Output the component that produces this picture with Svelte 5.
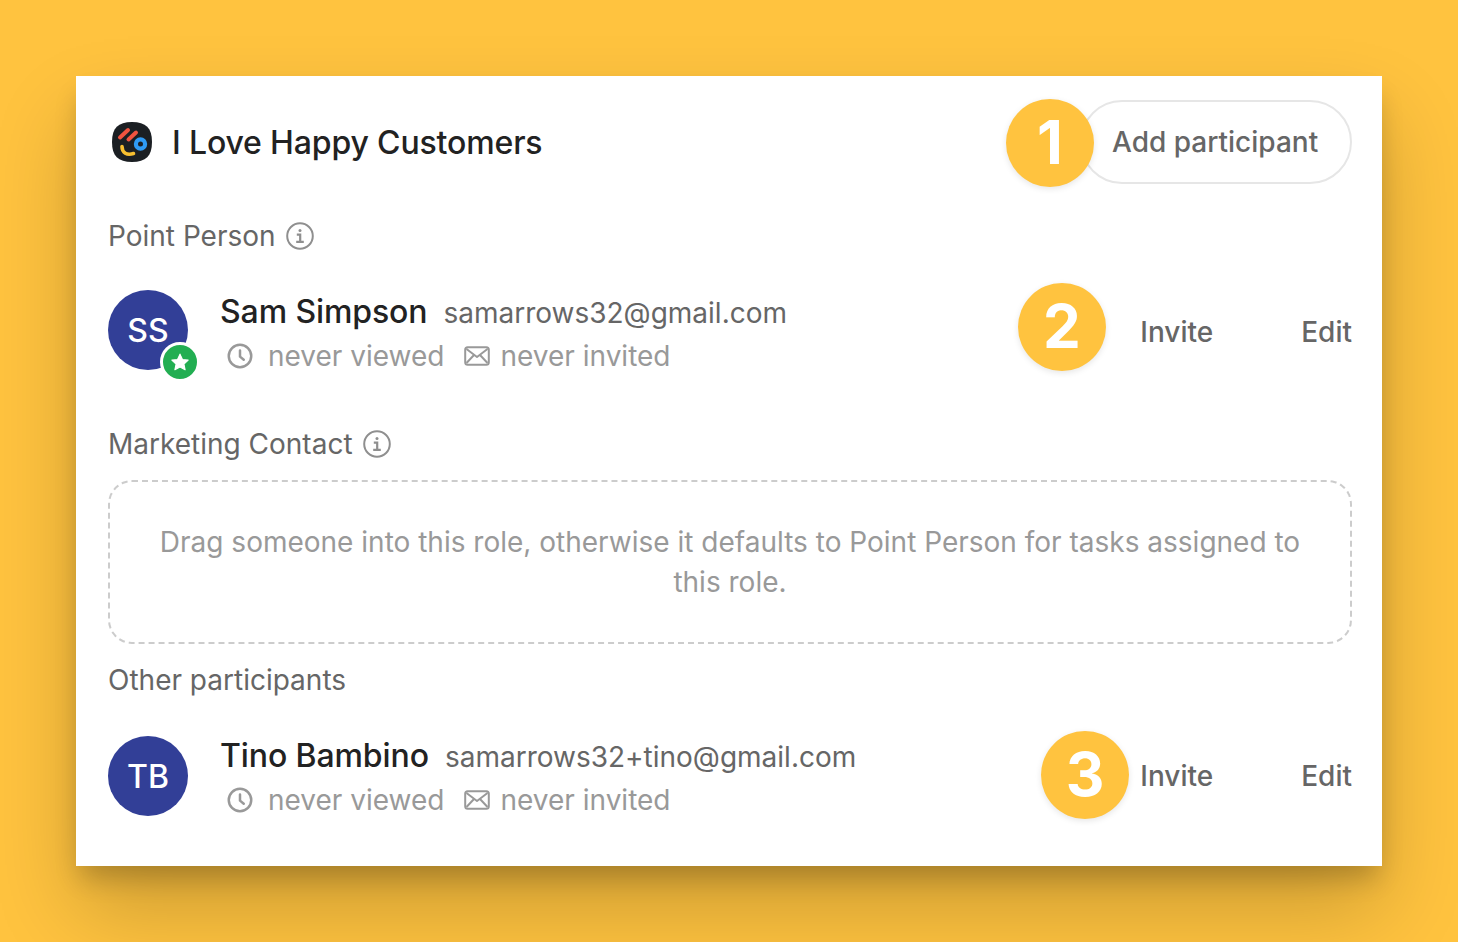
<script>
  const clock = "M12 3a9 9 0 1 0 0 18a9 9 0 0 0 0-18zM12 7.5v5l3 2.5";
</script>

{#snippet infoIcon()}
  <svg class="info" viewBox="0 0 28 28" fill="none" stroke="#8f8f8f" stroke-width="2">
    <circle cx="14" cy="14" r="12.8" />
    <circle cx="14" cy="8.4" r="1.5" fill="#8f8f8f" stroke="none" />
    <path d="M10.8 12.6h3.4v7M10.2 19.8h7.6" stroke-width="2.2" />
  </svg>
{/snippet}

{#snippet status()}
  <div class="status">
    <svg class="clock" viewBox="0 0 24 24" fill="none" stroke="#999" stroke-width="2" stroke-linecap="round" stroke-linejoin="round">
      <path d={clock} />
    </svg>
    <span class="st-text">never viewed</span>
    <svg class="mail" viewBox="0 0 26 20" fill="none" stroke="#999" stroke-width="2" stroke-linejoin="round">
      <rect x="1.2" y="1.2" width="23.6" height="17.6" rx="2.5" />
      <path d="M2.5 3l10.5 8l10.5-8M2.5 17l7.5-8M23.5 17l-7.5-8" />
    </svg>
    <span class="st-text">never invited</span>
  </div>
{/snippet}

<div class="page">
  <div class="card">
    <header class="head">
      <svg class="logo" viewBox="0 0 40 40">
        <path d="M20 0C34 0 40 6 40 20S34 40 20 40S0 34 0 20S6 0 20 0z" fill="#1b1f23" />
        <path d="M8 15.5L16 8M16.5 17.5L24 10.5" stroke="#f1533f" stroke-width="4" stroke-linecap="round" fill="none" />
        <circle cx="28.5" cy="22" r="4.6" fill="none" stroke="#2f9bf5" stroke-width="4.2" />
        <path d="M10 24.5C10 31 15 33.5 21.5 31.5" stroke="#f7bf30" stroke-width="3.6" stroke-linecap="round" fill="none" />
      </svg>
      <h1>I Love Happy Customers</h1>
      <button class="add">Add participant</button>
      <span class="badge b1">1</span>
    </header>

    <div class="label first">Point Person {@render infoIcon()}</div>
    <div class="person">
      <div class="avatar">
        SS
        <span class="star">
          <svg viewBox="0 0 24 24" fill="#fff" stroke="#fff" stroke-width="1.2" stroke-linejoin="round"><path d="M12 3.4l2.7 5.8l6.2.8l-4.6 4.3l1.3 6.2L12 17.4l-5.6 3.1l1.3-6.2l-4.6-4.3l6.2-.8z" /></svg>
        </span>
      </div>
      <div class="info-col lead">
        <div class="who"><span class="name">Sam Simpson</span><span class="email">samarrows32@gmail.com</span></div>
        {@render status()}
      </div>
      <div class="actions lead"><span class="invite">Invite</span><span>Edit</span></div>
      <span class="badge b2">2</span>
    </div>

    <div class="label second">Marketing Contact {@render infoIcon()}</div>
    <div class="drop">Drag someone into this role, otherwise it defaults to Point Person for tasks assigned to this role.</div>

    <div class="label third">Other participants</div>
    <div class="person last">
      <div class="avatar">TB</div>
      <div class="info-col other">
        <div class="who"><span class="name">Tino Bambino</span><span class="email">samarrows32+tino@gmail.com</span></div>
        {@render status()}
      </div>
      <div class="actions"><span class="invite">Invite</span><span>Edit</span></div>
      <span class="badge b3">3</span>
    </div>
  </div>
</div>

<style>
  :global(body) {
    background: #ffc33f;
    font-family: Inter, "Liberation Sans", sans-serif;
  }

  .page {
    width: 1458px;
    height: 942px;
    padding: 76px 76px 0;
    box-sizing: border-box;
    overflow: hidden;
  }

  .card {
    width: 1306px;
    height: 790px;
    box-sizing: border-box;
    background: #fff;
    padding: 24px 30px 0 32px;
    box-shadow: 0 44px 80px rgba(0, 0, 0, 0.2), 0 16px 24px -4px rgba(0, 0, 0, 0.2);
  }

  .head {
    position: relative;
    display: flex;
    align-items: center;
    height: 84px;
  }

  .logo {
    width: 40px;
    height: 40px;
    margin: 0 20px 0 4px;
    flex: none;
  }

  h1 {
    margin: 0;
    font-size: 32px;
    font-weight: 500;
    color: #222;
    flex: 1;
    letter-spacing: -0.15px;
  }

  .add {
    width: 272px;
    height: 84px;
    box-sizing: border-box;
    border: 2px solid #e6e6e6;
    border-radius: 42px;
    background: #fff;
    font: 500 28px Inter, sans-serif;
    color: #666;
    padding: 0 0 0 30px;
    text-align: left;
  }

  .badge {
    position: absolute;
    width: 88px;
    height: 88px;
    box-sizing: border-box;
    padding-bottom: 2px;
    border-radius: 50%;
    background: #ffc33f;
    color: #fff;
    font-size: 60px;
    font-weight: 700;
    display: flex;
    align-items: center;
    justify-content: center;
    box-shadow: 0 2px 6px rgba(0, 0, 0, 0.1);
  }

  .b1 { right: 258px; top: -1px; }
  .b2 { right: 246px; top: -7px; }
  .b3 { right: 223px; top: -5px; }

  .label {
    display: flex;
    align-items: center;
    gap: 10px;
    font-size: 28px;
    color: #666;
    height: 40px;
  }

  .first { margin-top: 32px; }
  .second { margin-top: 54px; }
  .third { margin-top: 16px; }

  .info {
    width: 28px;
    height: 28px;
  }

  .person {
    position: relative;
    display: flex;
    align-items: center;
    height: 80px;
    margin-top: 34px;
  }

  .person.last { margin-top: 36px; }

  .avatar {
    position: relative;
    width: 80px;
    height: 80px;
    flex: none;
    border-radius: 50%;
    background: #323f97;
    color: #fff;
    font-size: 32px;
    font-weight: 500;
    display: flex;
    align-items: center;
    justify-content: center;
  }

  .star {
    position: absolute;
    left: 52px;
    top: 52px;
    width: 40px;
    height: 40px;
    box-sizing: border-box;
    border: 3px solid #fff;
    border-radius: 50%;
    background: #22ae52;
    display: flex;
    align-items: center;
    justify-content: center;
  }

  .star svg {
    width: 22px;
    height: 22px;
  }

  .info-col {
    margin-left: 32px;
    flex: 1;
  }

  .info-col.lead { padding-top: 8px; }
  .info-col.other { padding-top: 4px; }
  .actions.lead { padding-top: 4px; }

  .who {
    display: flex;
    align-items: baseline;
    gap: 16px;
    height: 44px;
    line-height: 44px;
  }

  .name {
    font-size: 32px;
    font-weight: 500;
    color: #222;
    letter-spacing: -0.1px;
  }

  .email {
    font-size: 28px;
    color: #666;
  }

  .status {
    display: flex;
    align-items: center;
    height: 44px;
    color: #999;
    font-size: 28px;
  }

  .clock {
    width: 30px;
    height: 30px;
    margin: 0 13px 0 5px;
  }

  .mail {
    width: 26px;
    height: 20px;
    margin: 0 10px 0 20px;
  }

  .actions {
    display: flex;
    font-size: 28px;
    font-weight: 500;
    color: #666;
  }

  .invite {
    margin-right: 88px;
  }

  .drop {
    margin-top: 16px;
    height: 164px;
    box-sizing: border-box;
    border: 2px dashed #ccc;
    border-radius: 24px;
    padding: 40px 32px 0;
    text-align: center;
    font-size: 28px;
    line-height: 40px;
    color: #999;
  }
</style>
